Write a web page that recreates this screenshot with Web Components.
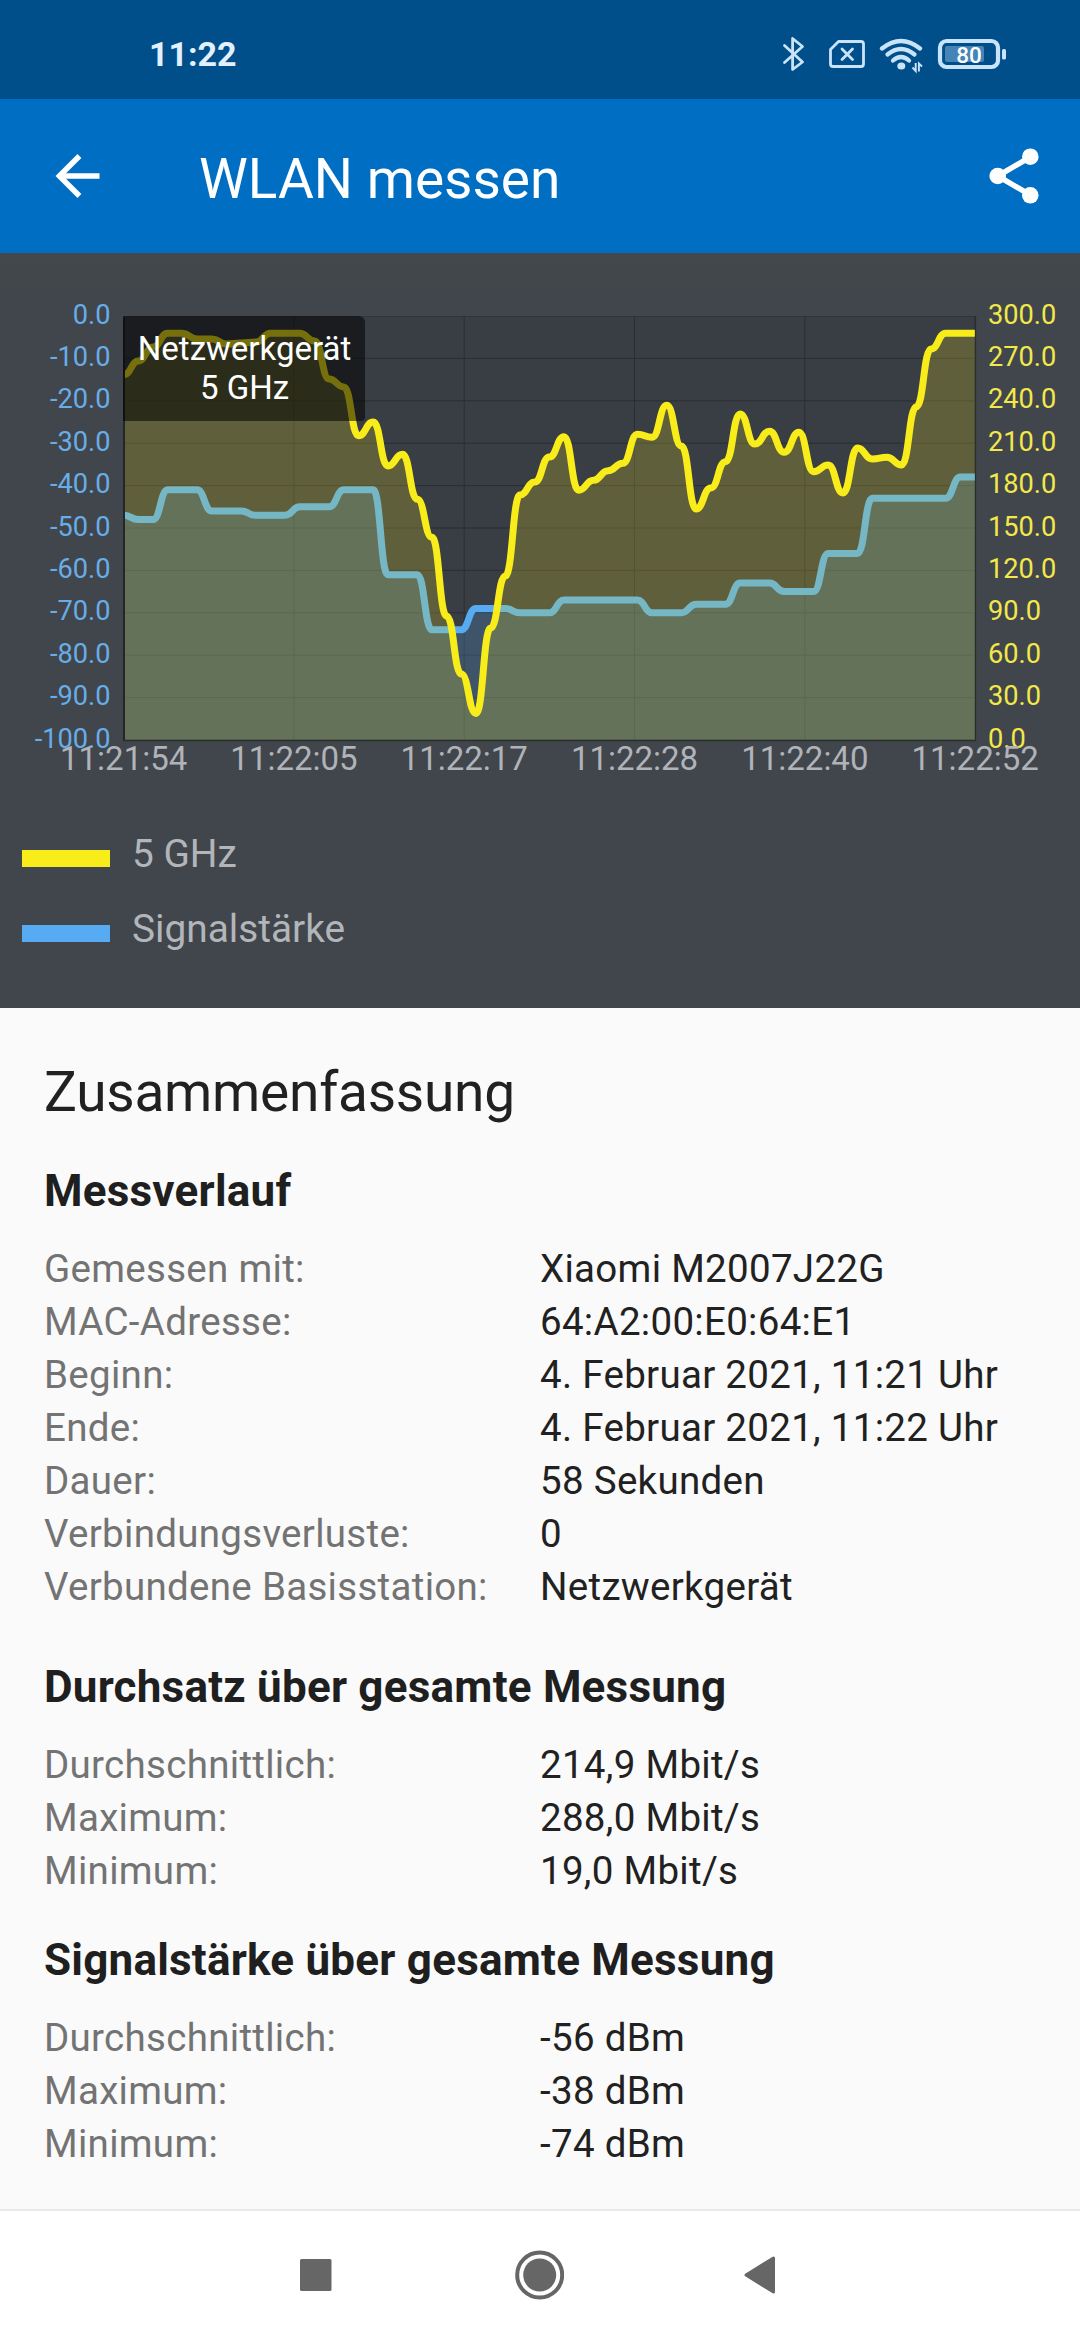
<!DOCTYPE html>
<html lang="de">
<head>
<meta charset="utf-8">
<title>WLAN messen</title>
<style>
html,body{margin:0;padding:0}
body{width:1080px;height:2340px;overflow:hidden;background:#fafafa;font-family:Roboto,"Noto Sans",sans-serif}
</style>
</head>
<body>
<wlan-app></wlan-app>
<script>
const define = (name, html, setup) => customElements.define(name, class extends HTMLElement {
  connectedCallback() {
    if (this.shadowRoot) return;
    const root = this.attachShadow({mode: 'open'});
    const t = document.createElement('template');
    t.innerHTML = html;
    root.append(t.content.cloneNode(true));
    if (setup) setup(this, root);
  }
});

define('status-bar', `
<style>
:host{display:flex;box-sizing:border-box;height:99px;background:#004f8b;padding:0 74px 0 149px;justify-content:space-between;color:#d9ecfb}
.time{font-weight:700;font-size:34px;line-height:40px;margin-top:34px;color:#e2f1fc}
svg{display:block;margin-top:33px}
</style>
<div class="time">11:22</div>
<svg width="226" height="42" viewBox="780 33 226 42" fill="none" stroke="#c9e3f9">
 <path d="M784.5 45.5L802.5 62L792.6 69.5V38.5L802.5 46.5L784.5 62.5" stroke-width="2.8" stroke-linejoin="round" stroke-linecap="round"/>
 <path d="M838.5 41.5H861a2.5 2.5 0 0 1 2.5 2.5V64a2.5 2.5 0 0 1-2.5 2.5H833a2.500 2.500 0 0 1-2.500-2.500V49.500z" stroke-width="2.800" stroke-linejoin="round"/>
 <path d="M842 49l10.500 10.500M852.500 49L842 59.500" stroke-width="2.800" stroke-linecap="round"/>
 <path d="M882 48.500Q901 33.500 920 48.500" stroke-width="4.300" stroke-linecap="round"/>
 <path d="M887.500 54.500Q901 43.500 914.500 54.500" stroke-width="4.300" stroke-linecap="round"/>
 <path d="M893 60.500Q901 53.500 909 60.500" stroke-width="4.300" stroke-linecap="round"/>
 <ellipse cx="901.300" cy="66" rx="4" ry="3.600" fill="#c9e3f9" stroke="none"/>
 <path d="M915.700 63V71L912.500 67.500M918.900 71.500V63.500L922 66.500" stroke-width="1.900"/>
 <rect x="940" y="41" width="58" height="26" rx="6.500" stroke-width="4.200"/>
 <rect x="945" y="46" width="39" height="16" rx="2" fill="#4584b6" stroke="none"/>
 <rect x="1002" y="49" width="4" height="10.500" rx="1.500" fill="#c9e3f9" stroke="none"/>
 <text x="969" y="62.800" text-anchor="middle" font-size="22.500" font-weight="500" fill="#fff" stroke="none">80</text>
</svg>`);

define('app-bar', `
<style>
:host{display:flex;align-items:center;box-sizing:border-box;height:154px;background:#006ec2;padding:0 41px 0 55px;color:#fff}
h1{flex:1;margin:0 0 0 99px;font-size:55px;font-weight:400;line-height:64px;padding-top:6px}
svg{display:block}
</style>
<svg width="45" height="44" viewBox="0 0 44 44"><path d="M44 19.250H10.530L25.900 3.880 22 0 0 22l22 22 3.880-3.880L10.530 24.750H44z" fill="#fff"/></svg>
<h1><slot></slot></h1>
<svg width="50" height="56" viewBox="0 0 50 56"><g stroke="#fff" stroke-width="5.500" fill="none"><path d="M41.300 9L8.700 28l32.600 19"/></g><g fill="#fff"><circle cx="41.300" cy="8.700" r="8.300"/><circle cx="8.700" cy="28" r="8.300"/><circle cx="41.300" cy="47.300" r="8.300"/></g></svg>`);

define('chart-tooltip', `
<style>
:host{display:block;box-sizing:border-box;width:242px;height:105px;padding:13px 0 0 1px;background:rgba(0,0,0,.53);border-radius:3px 6px 4px 0;color:#fff;font-size:33px;line-height:39px;text-align:center}
</style><slot></slot>`);

define('legend-item', `
<style>
:host{display:flex;align-items:center;height:75px;font-size:38.800px;line-height:46px;color:#b2b5b9}
i{width:88px;height:17px;margin:0 22px 0 22px;background:var(--swatch)}
span{margin-top:-9px}
</style><i></i><span><slot></slot></span>`);

const throughput = [375,361,347,333.300,333.300,339,339,344,343,342,333.300,333.300,333.300,341,379,387,435.700,422,466,454.300,499.300,537.300,616,674,713.500,628,576,495,482,457,436.700,490.300,480.300,470.700,463.300,434.300,437.300,405.300,446,509,488,461.700,414,444,431.300,452.300,432.300,471.700,465,493,448,459,457.300,465,406.700,349,333.300,333.300,333.300];
const signal = [47,48,48,41,41,41,46,46,46,47,47,47,45,45,45,41,41,41,61,61,61,74,74,74,69,69,69,70,70,70,67,67,67,67,67,67,70,70,70,68,68,68,63,63,63,65,65,65,56,56,56,43,43,43,43,43,43,38,38].map(v => 316 + v * 4.24);

define('measure-chart', `
<style>
:host{display:block;box-sizing:border-box;height:755px;padding-top:63px;background:linear-gradient(#43484c,#41464c 60px)}
.row{display:flex;height:425px;position:relative}
.axis{display:flex;flex-direction:column;margin-top:-22.500px;font-size:27.200px;line-height:42.400px;height:466.400px}
.left{width:110.500px;margin-right:11.500px;text-align:right;color:#68ade8}
.right{margin-left:10px;color:#f2e84a}
svg{display:block;flex:none}
.times{display:flex;position:relative;margin:-2px 0 0 38.500px;font-size:33px;line-height:40px;color:#b0b3b8}
.times span{width:170.300px;flex:none;text-align:center}
chart-tooltip{position:absolute;left:123px;top:0}
.legend{margin-top:41.500px}
</style>
<div class="row">
 <div class="axis left"></div>
 <svg width="856" height="426" viewBox="122 316 856 426"></svg>
 <div class="axis right"></div>
 <chart-tooltip>Netzwerkgerät<br>5 GHz</chart-tooltip>
</div>
<div class="times"></div>
<div class="legend">
 <legend-item style="--swatch:#f9ec1b">5 GHz</legend-item>
 <legend-item style="--swatch:#56abf2">Signalstärke</legend-item>
</div>`, (host, root) => {
  const add = (sel, items) => { root.querySelector(sel).innerHTML = items.map(s => `<span>${s}</span>`).join(''); };
  const steps = [...Array(11).keys()];
  add('.left', steps.map(i => (i ? '-' : '') + (i * 10).toFixed(1)));
  add('.right', steps.map(i => (300 - i * 30).toFixed(1)));
  add('.times', ['11:21:54','11:22:05','11:22:17','11:22:28','11:22:40','11:22:52']);
  const X = i => 123.7 + i * 851.3 / 58;
  // Horizontal Bézier: the tangent is flat at every sample
  const curve = d => d.map((y, i) => {
    if (!i) return `M${X(0)} ${y}`;
    const m = (X(i) + X(i - 1)) / 2;
    return `C${m} ${d[i - 1]} ${m} ${y} ${X(i)} ${y}`;
  }).join('');
  const area = d => curve(d) + `L975 740L${X(0)} 740Z`;
  const grid = steps.map(i => `M124 ${316 + i * 42.4}H975`).join('') +
    [0,1,2,3,4,5].map(i => `M${123.7 + i * 170.26} 316V740`).join('');
  root.querySelector('svg').innerHTML = `
   <defs><clipPath id="c"><rect x="124" y="316" width="851" height="424"/></clipPath></defs>
   <rect x="124" y="316" width="851" height="424" fill="#393d44"/>
   <path d="${grid}" stroke="#2b2e33" stroke-width="1" fill="none"/>
   <g clip-path="url(#c)" stroke-linejoin="round" stroke-width="7" fill="none">
    <path d="${area(signal)}" fill="#56abf2" fill-opacity=".215"/>
    <path d="${curve(signal)}" stroke="#56abf2"/>
    <path d="${area(throughput)}" fill="#f9ec1b" fill-opacity=".2"/>
    <path d="${curve(throughput)}" stroke="#f9ec1b"/>
   </g>
   <path d="M124 316V740.500" stroke="#23262a" stroke-width="2"/><path d="M123 740.500H975.500V316" stroke="#2a2f2d" stroke-width="1.300" fill="none"/>`;
});

define('data-row', `
<style>
:host{display:flex;font-size:38.500px;line-height:53px;height:53px;white-space:nowrap;letter-spacing:.3px}
.k{width:496px;flex:none;color:#737373}
.v{color:#212121}
</style><span class="k"></span><span class="v"><slot></slot></span>`, (host, root) => {
  root.querySelector('.k').textContent = host.getAttribute('label');
});

define('data-section', `
<style>
:host{display:block}
h3{margin:0 0 21px;font-size:44px;line-height:60px;font-weight:700;letter-spacing:.22px;color:#1f1f1f}
</style><h3></h3><slot></slot>`, (host, root) => {
  root.querySelector('h3').textContent = host.getAttribute('heading');
});

define('nav-bar', `
<style>
:host{display:flex;box-sizing:border-box;height:131px;background:#fff;border-top:2px solid #e9e9e9;justify-content:space-between;align-items:center;padding:0 304px 2px 300px}
svg{display:block}
</style>
<svg width="32" height="32"><rect width="31.500" height="32" rx="1.500" fill="#666"/></svg>
<svg width="52" height="50"><circle cx="27.700" cy="25" r="22.500" fill="none" stroke="#666" stroke-width="4"/><circle cx="27.700" cy="25" r="16.500" fill="#666"/></svg>
<svg width="32" height="38"><path d="M2 19L29.500 2V36z" fill="#666" stroke="#666" stroke-width="3" stroke-linejoin="round"/></svg>`);

define('wlan-app', `
<style>
:host{display:flex;flex-direction:column;width:1080px;height:2340px;background:#fafafa}
main{flex:1;padding:47px 44px 0}
h2{margin:0 0 32px;font-size:55px;line-height:74px;font-weight:400;letter-spacing:-.24px;color:#212121}
.a{margin-bottom:44px}.b{margin-bottom:33px}
</style>
<status-bar></status-bar>
<app-bar>WLAN messen</app-bar>
<measure-chart></measure-chart>
<main>
 <h2>Zusammenfassung</h2>
 <data-section class="a" heading="Messverlauf">
  <data-row label="Gemessen mit:">Xiaomi M2007J22G</data-row>
  <data-row label="MAC-Adresse:">64:A2:00:E0:64:E1</data-row>
  <data-row label="Beginn:">4. Februar 2021, 11:21 Uhr</data-row>
  <data-row label="Ende:">4. Februar 2021, 11:22 Uhr</data-row>
  <data-row label="Dauer:">58 Sekunden</data-row>
  <data-row label="Verbindungsverluste:">0</data-row>
  <data-row label="Verbundene Basisstation:">Netzwerkgerät</data-row>
 </data-section>
 <data-section class="b" heading="Durchsatz über gesamte Messung">
  <data-row label="Durchschnittlich:">214,9 Mbit/s</data-row>
  <data-row label="Maximum:">288,0 Mbit/s</data-row>
  <data-row label="Minimum:">19,0 Mbit/s</data-row>
 </data-section>
 <data-section heading="Signalstärke über gesamte Messung">
  <data-row label="Durchschnittlich:">-56 dBm</data-row>
  <data-row label="Maximum:">-38 dBm</data-row>
  <data-row label="Minimum:">-74 dBm</data-row>
 </data-section>
</main>
<nav-bar></nav-bar>`);
</script>
</body>
</html>
